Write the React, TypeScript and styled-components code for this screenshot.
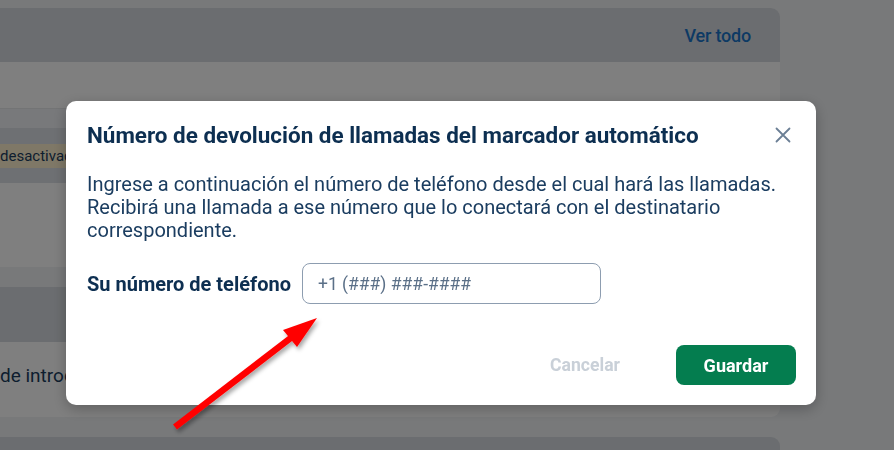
import React from "react";
import styled, { createGlobalStyle } from "styled-components";

const GlobalStyle = createGlobalStyle`
  html, body { margin: 0; padding: 0; }
  body {
    background: #f0f2f5;
    font-family: Roboto, "Liberation Sans", Arial, sans-serif;
    overflow: hidden;
    width: 894px;
    height: 450px;
  }
`;

const Page = styled.div`
  display: flex;
  flex-direction: column;
  gap: 20px;
  padding-top: 8px;
  margin-left: -30px;
  width: 810px;
`;

const Card = styled.section<{ $h: number; $open?: boolean }>`
  background: #ffffff;
  border-radius: ${(p) => (p.$open ? "9px 9px 0 0" : "9px")};
  overflow: hidden;
  height: ${(p) => p.$h}px;
  display: flex;
  flex-direction: column;
  flex-shrink: 0;
`;

const CardHeader = styled.div<{ $h: number }>`
  height: ${(p) => p.$h}px;
  flex-shrink: 0;
  background: #d7dbe0;
  display: flex;
  align-items: center;
  justify-content: flex-end;
  padding-right: 29px;
`;

const HeaderLink = styled.a`
  font-size: 18px;
  font-weight: 500;
  color: #1b74c9;
  text-decoration: none;
  letter-spacing: -0.2px;
`;

const WhiteRow = styled.div<{ $h: number }>`
  height: ${(p) => p.$h}px;
  flex-shrink: 0;
  border-bottom: 1px solid #e6e8eb;
`;

const GapRow = styled.div`
  height: 19px;
  flex-shrink: 0;
  background: #f0f2f6;
`;

const StatusRow = styled.div`
  height: 55px;
  flex-shrink: 0;
  background: #dde1e7;
  display: flex;
  align-items: center;
`;

const Badge = styled.span`
  margin-left: 20px;
  height: 24px;
  display: inline-flex;
  align-items: center;
  padding: 0 10px;
  background: #fff1cf;
  color: #1c3d5e;
  font-size: 15px;
`;

const CardBody = styled.div`
  flex: 1;
  display: flex;
  align-items: center;
  padding-left: 30px;
  padding-bottom: 8px;
  color: #1c3d5e;
  font-size: 19px;
`;

const Overlay = styled.div`
  position: fixed;
  inset: 0;
  background: rgba(0, 0, 0, 0.5);
`;

const Modal = styled.div`
  position: fixed;
  left: 66px;
  top: 101px;
  width: 750px;
  height: 304px;
  box-sizing: border-box;
  background: #ffffff;
  border-radius: 10px;
  box-shadow: 0 4px 14px rgba(0, 0, 0, 0.25);
  padding: 18px 20px 20px 21px;
  display: flex;
  flex-direction: column;
`;

const ModalHeader = styled.div`
  display: flex;
  align-items: center;
  justify-content: space-between;
  height: 32px;
  padding-right: 4px;
`;

const Title = styled.h2`
  margin: 0;
  font-size: 22.45px;
  font-weight: 700;
  color: #0d2f51;
`;

const CloseButton = styled.button`
  border: none;
  background: transparent;
  padding: 0;
  width: 18px;
  height: 18px;
  display: flex;
  align-items: center;
  justify-content: center;
  cursor: pointer;
`;

const Description = styled.p`
  margin: 22px 0 0 0;
  font-size: 20px;
  line-height: 23px;
  color: #1b3d60;
  max-width: 700px;
`;

const FieldRow = styled.div`
  display: flex;
  align-items: center;
  gap: 11px;
  margin-top: 21px;
`;

const Label = styled.label`
  font-size: 20px;
  font-weight: 700;
  color: #0d2f51;
`;

const PhoneInput = styled.input`
  width: 299px;
  height: 41px;
  box-sizing: border-box;
  border: 1px solid #8d9db0;
  border-radius: 8px;
  padding: 0 15px;
  font-family: inherit;
  font-size: 17.5px;
  color: #1b3d60;
  outline: none;
  &::placeholder { color: #5b7088; }
`;

const Footer = styled.div`
  margin-top: auto;
  display: flex;
  justify-content: flex-end;
  align-items: center;
  gap: 56px;
`;

const TextButton = styled.button`
  border: none;
  background: transparent;
  font-family: inherit;
  font-size: 17.6px;
  font-weight: 700;
  color: #c9d0d8;
  padding: 0;
`;

const PrimaryButton = styled.button`
  border: none;
  background: #047d4f;
  color: #ffffff;
  font-family: inherit;
  font-size: 18px;
  font-weight: 700;
  width: 120px;
  height: 40px;
  border-radius: 8px;
`;

const ArrowLayer = styled.svg`
  position: fixed;
  inset: 0;
  pointer-events: none;
`;

export default function App() {
  return (
    <>
      <GlobalStyle />
      <Page>
        <Card $h={259}>
          <CardHeader $h={54}>
            <HeaderLink>Ver todo</HeaderLink>
          </CardHeader>
          <WhiteRow $h={46} />
          <GapRow />
          <StatusRow>
            <Badge>desactivado</Badge>
          </StatusRow>
        </Card>
        <Card $h={130}>
          <CardHeader $h={55} />
          <CardBody>de introducción</CardBody>
        </Card>
        <Card $h={13} $open>
          <CardHeader $h={13} />
        </Card>
      </Page>
      <Overlay />
      <Modal role="dialog">
        <ModalHeader>
          <Title>Número de devolución de llamadas del marcador automático</Title>
          <CloseButton aria-label="Cerrar">
            <svg width="16" height="16" viewBox="0 0 16 16">
              <path d="M1.5 1.5 L14.5 14.5 M14.5 1.5 L1.5 14.5" stroke="#6b7f95" strokeWidth="1.8" strokeLinecap="round" />
            </svg>
          </CloseButton>
        </ModalHeader>
        <Description>
          Ingrese a continuación el número de teléfono desde el cual hará las llamadas. Recibirá una llamada a ese número que lo conectará con el destinatario correspondiente.
        </Description>
        <FieldRow>
          <Label>Su número de teléfono</Label>
          <PhoneInput placeholder="+1 (###) ###-####" />
        </FieldRow>
        <Footer>
          <TextButton>Cancelar</TextButton>
          <PrimaryButton>Guardar</PrimaryButton>
        </Footer>
      </Modal>
      <ArrowLayer width="894" height="450" viewBox="0 0 894 450">
        <defs>
          <filter id="arrowShadow" x="-20%" y="-20%" width="140%" height="140%">
            <feDropShadow dx="2" dy="3" stdDeviation="2" floodColor="#000" floodOpacity="0.35" />
          </filter>
        </defs>
        <g filter="url(#arrowShadow)">
          <line x1="175" y1="427" x2="292" y2="337" stroke="#ff0000" strokeWidth="6.5" />
          <polygon points="317,318 283,330 297,347" fill="#ff0000" />
        </g>
      </ArrowLayer>
    </>
  );
}
